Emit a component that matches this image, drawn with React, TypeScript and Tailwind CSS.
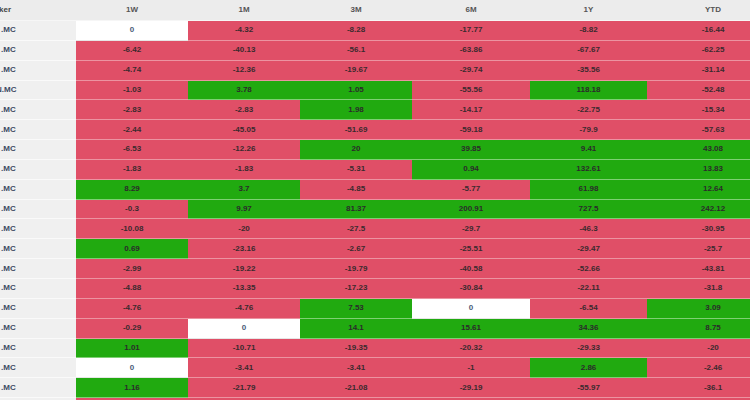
const COLS = ['1W', '1M', '3M', '6M', '1Y', 'YTD'];

// g = green, r = red, w = white (zero)
const ROWS: { t: string; v: [string, string][] }[] = [
  { t: '.MC', v: [['0', 'w'], ['-4.32', 'r'], ['-8.28', 'r'], ['-17.77', 'r'], ['-8.82', 'r'], ['-16.44', 'r']] },
  { t: '.MC', v: [['-6.42', 'r'], ['-40.13', 'r'], ['-56.1', 'r'], ['-63.86', 'r'], ['-67.67', 'r'], ['-62.25', 'r']] },
  { t: '.MC', v: [['-4.74', 'r'], ['-12.36', 'r'], ['-19.67', 'r'], ['-29.74', 'r'], ['-35.56', 'r'], ['-31.14', 'r']] },
  { t: 'N.MC', v: [['-1.03', 'r'], ['3.78', 'g'], ['1.05', 'g'], ['-55.56', 'r'], ['118.18', 'g'], ['-52.48', 'r']] },
  { t: '.MC', v: [['-2.83', 'r'], ['-2.83', 'r'], ['1.98', 'g'], ['-14.17', 'r'], ['-22.75', 'r'], ['-15.34', 'r']] },
  { t: '.MC', v: [['-2.44', 'r'], ['-45.05', 'r'], ['-51.69', 'r'], ['-59.18', 'r'], ['-79.9', 'r'], ['-57.63', 'r']] },
  { t: '.MC', v: [['-6.53', 'r'], ['-12.26', 'r'], ['20', 'g'], ['39.85', 'g'], ['9.41', 'g'], ['43.08', 'g']] },
  { t: '.MC', v: [['-1.83', 'r'], ['-1.83', 'r'], ['-5.31', 'r'], ['0.94', 'g'], ['132.61', 'g'], ['13.83', 'g']] },
  { t: '.MC', v: [['8.29', 'g'], ['3.7', 'g'], ['-4.85', 'r'], ['-5.77', 'r'], ['61.98', 'g'], ['12.64', 'g']] },
  { t: '.MC', v: [['-0.3', 'r'], ['9.97', 'g'], ['81.37', 'g'], ['200.91', 'g'], ['727.5', 'g'], ['242.12', 'g']] },
  { t: '.MC', v: [['-10.08', 'r'], ['-20', 'r'], ['-27.5', 'r'], ['-29.7', 'r'], ['-46.3', 'r'], ['-30.95', 'r']] },
  { t: '.MC', v: [['0.69', 'g'], ['-23.16', 'r'], ['-2.67', 'r'], ['-25.51', 'r'], ['-29.47', 'r'], ['-25.7', 'r']] },
  { t: '.MC', v: [['-2.99', 'r'], ['-19.22', 'r'], ['-19.79', 'r'], ['-40.58', 'r'], ['-52.66', 'r'], ['-43.81', 'r']] },
  { t: '.MC', v: [['-4.88', 'r'], ['-13.35', 'r'], ['-17.23', 'r'], ['-30.84', 'r'], ['-22.11', 'r'], ['-31.8', 'r']] },
  { t: '.MC', v: [['-4.76', 'r'], ['-4.76', 'r'], ['7.53', 'g'], ['0', 'w'], ['-6.54', 'r'], ['3.09', 'g']] },
  { t: '.MC', v: [['-0.29', 'r'], ['0', 'w'], ['14.1', 'g'], ['15.61', 'g'], ['34.36', 'g'], ['8.75', 'g']] },
  { t: '.MC', v: [['1.01', 'g'], ['-10.71', 'r'], ['-19.35', 'r'], ['-20.32', 'r'], ['-29.33', 'r'], ['-20', 'r']] },
  { t: '.MC', v: [['0', 'w'], ['-3.41', 'r'], ['-3.41', 'r'], ['-1', 'r'], ['2.86', 'g'], ['-2.46', 'r']] },
  { t: '.MC', v: [['1.16', 'g'], ['-21.79', 'r'], ['-21.08', 'r'], ['-29.19', 'r'], ['-55.97', 'r'], ['-36.1', 'r']] },
  // next row only peeks in at the bottom edge
  { t: '', v: [['', 'r'], ['', 'r'], ['', 'r'], ['', 'r'], ['', 'r'], ['', 'r']] },
];

const GRID = 'grid grid-cols-[76px_112px_112px_112px_118px_117px_132px]';

function cellClass(c: string) {
  if (c === 'g') return 'bg-[#21aa10] text-[#2b2b2b] border-[#7fd074]';
  if (c === 'w') return 'bg-white text-[#4a5a78] border-[#e6e6e6]';
  return 'bg-[#e04f67] text-[#3a2a2e] border-[#ec93a1]';
}

export default function App() {
  return (
    <div className="w-[750px] h-[400px] overflow-hidden bg-white font-['Liberation_Sans',Arial,sans-serif] text-[8px] font-bold">
      <div className="w-[779px]">
        {/* header */}
        <div className={`${GRID} h-[21px] bg-[#ececec] border-b border-[#f6f6f6] text-[#555]`}>
          <div className="flex items-center -ml-[1px] text-[#444]">ker</div>
          {COLS.map(c => (
            <div key={c} className="flex items-center justify-center">{c}</div>
          ))}
        </div>

        {/* rows */}
        {ROWS.map((row, i) => (
          <div key={i} className={`${GRID} h-[19.85px]`}>
            <div className={`flex items-center bg-[#f0f0f0] border-b border-[#fafafa] text-[#3b4a63] ${row.t.length > 3 ? '-ml-[4px]' : 'pl-[1px]'}`}>
              {row.t}
            </div>
            {row.v.map(([val, c], j) => (
              <div key={j} className={`flex items-center justify-center border-b ${cellClass(c)}`}>
                {val}
              </div>
            ))}
          </div>
        ))}
      </div>
    </div>
  );
}
